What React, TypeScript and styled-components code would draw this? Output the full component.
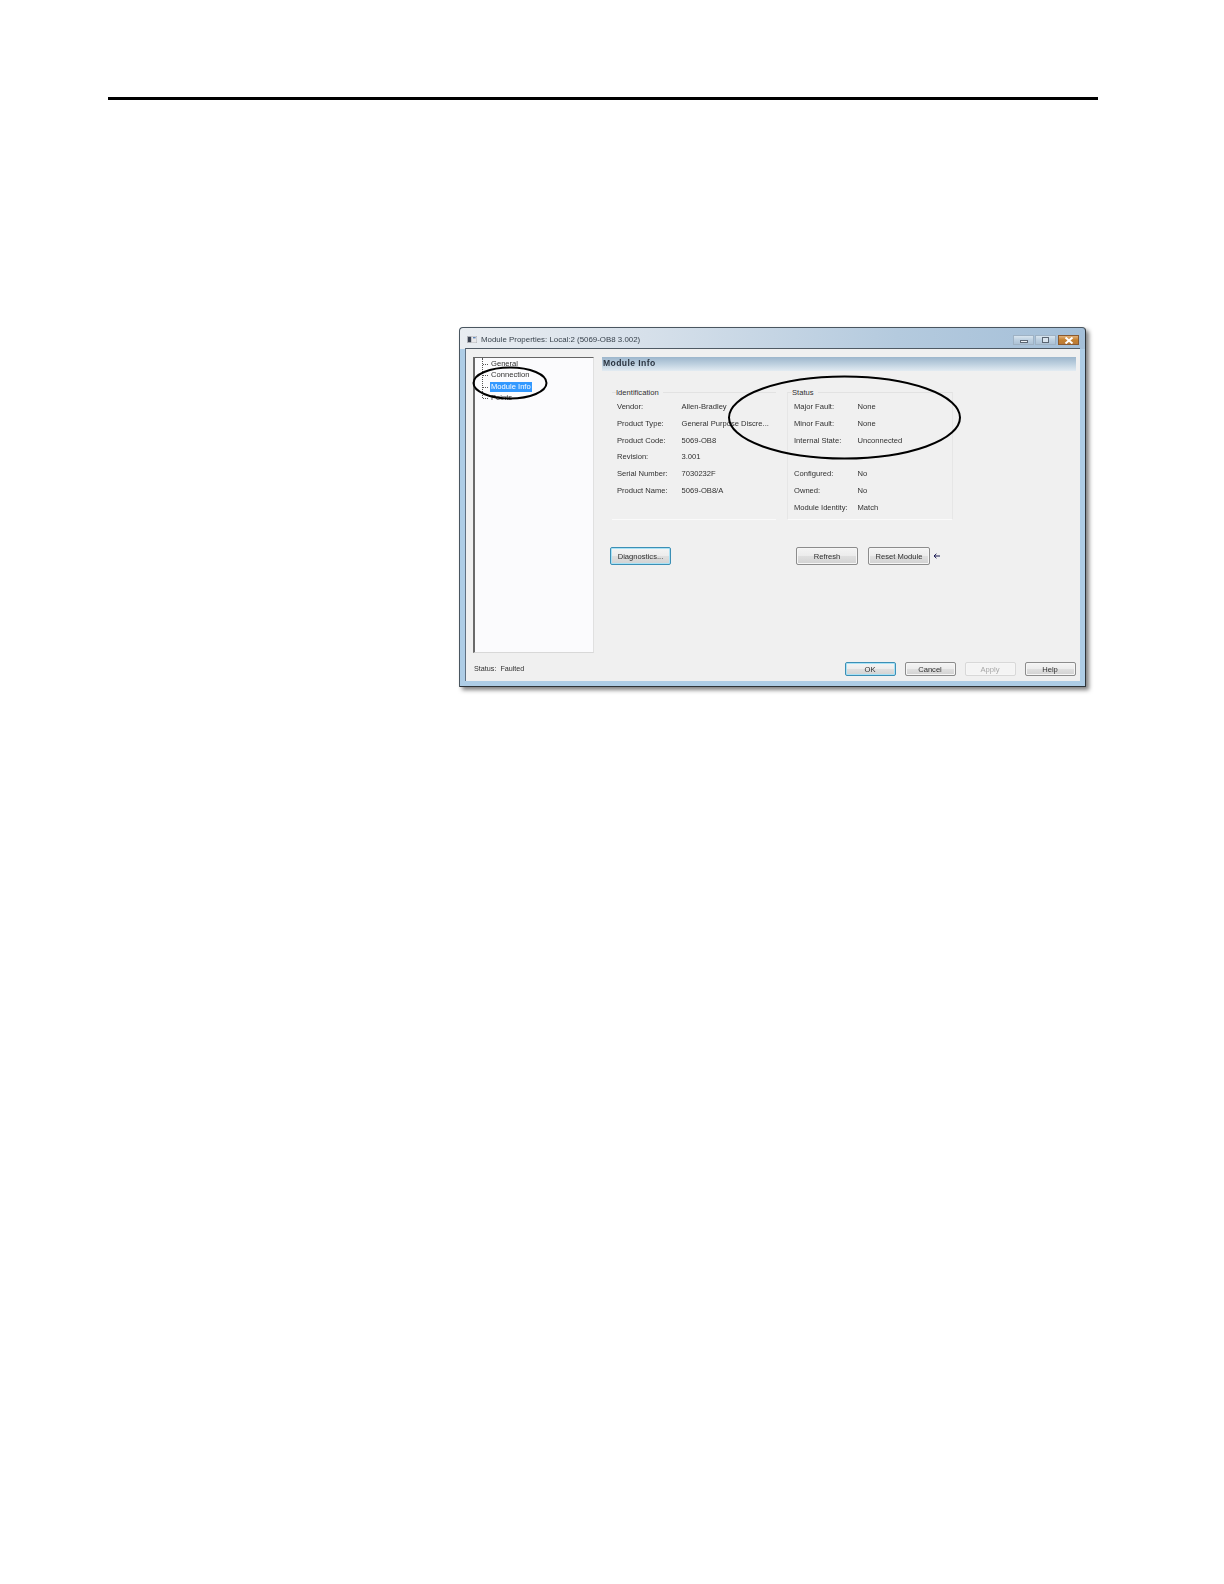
import { FC } from 'react';
import styled, { createGlobalStyle } from 'styled-components';

type InfoRow = { label: string; value: string };

const identification: InfoRow[] = [
  { label: 'Vendor:', value: 'Allen-Bradley' },
  { label: 'Product Type:', value: 'General Purpose Discre...' },
  { label: 'Product Code:', value: '5069-OB8' },
  { label: 'Revision:', value: '3.001' },
  { label: 'Serial Number:', value: '7030232F' },
  { label: 'Product Name:', value: '5069-OB8/A' },
];

// the blank row is the gap between Internal State and Configured
const status: InfoRow[] = [
  { label: 'Major Fault:', value: 'None' },
  { label: 'Minor Fault:', value: 'None' },
  { label: 'Internal State:', value: 'Unconnected' },
  { label: '', value: '' },
  { label: 'Configured:', value: 'No' },
  { label: 'Owned:', value: 'No' },
  { label: 'Module Identity:', value: 'Match' },
];

const treeItems = ['General', 'Connection', 'Module Info', 'Points'];

const InfoGroup: FC<{ title: string; rows: InfoRow[]; $boxed?: boolean }> = ({ title, rows, $boxed }) => (
  <Group $boxed={$boxed}>
    <Legend>{title}</Legend>
    {rows.map((row, i) => (
      <Row key={i} $boxed={$boxed}>
        <Label $boxed={$boxed}>{row.label}</Label>
        <span>{row.value}</span>
      </Row>
    ))}
  </Group>
);

export default function App() {
  return (
    <Page>
      <GlobalStyle />
      <TopRule />
      <Window>
        <TitleBar>
          <AppIcon viewBox="0 0 10 7">
            <rect width="10" height="7" fill="#e8e8ea" stroke="#8a8f98" strokeWidth="0.6" />
            <rect x="0.8" y="0.8" width="3.4" height="5.4" fill="#3b4250" />
            <rect x="6" y="1" width="2.6" height="1.4" fill="#5f86b8" />
          </AppIcon>
          <TitleText>Module Properties: Local:2 (5069-OB8 3.002)</TitleText>
          <WindowButtons>
            <WindowButton>
              <MinGlyph />
            </WindowButton>
            <WindowButton>
              <MaxGlyph />
            </WindowButton>
            <CloseButton>
              <svg width="10" height="7" viewBox="0 0 10 7">
                <path d="M1.5 0.5 L8.5 6.5 M8.5 0.5 L1.5 6.5" stroke="#fff" strokeWidth="2" />
              </svg>
            </CloseButton>
          </WindowButtons>
        </TitleBar>

        <Client>
          <Sidebar>
            <Tree>
              <TreeList>
                {treeItems.map(item => (
                  <TreeRow key={item}>
                    <TreeLabel $selected={item === 'Module Info'}>{item}</TreeLabel>
                  </TreeRow>
                ))}
              </TreeList>
            </Tree>
            <StatusLine>
              <span>Status:</span>
              <span>Faulted</span>
            </StatusLine>
          </Sidebar>

          <Main>
            <PanelHeader>Module Info</PanelHeader>
            <Groups>
              <InfoGroup title="Identification" rows={identification} />
              <InfoGroup title="Status" rows={status} $boxed />
            </Groups>
            <Actions>
              <Button $width={61} $focused>
                Diagnostics...
              </Button>
              <RightActions>
                <Button $width={62}>Refresh</Button>
                <Button $width={62}>Reset Module</Button>
                <svg width="7" height="6" viewBox="0 0 7 6">
                  <path d="M7 3 H1.5 M3.4 0.8 L1 3 L3.4 5.2" stroke="#16164f" strokeWidth="1" fill="none" />
                </svg>
              </RightActions>
            </Actions>
            <Footer>
              <FooterButton $width={51} $focused>
                OK
              </FooterButton>
              <FooterButton $width={51}>Cancel</FooterButton>
              <FooterButton $width={51} $disabled>
                Apply
              </FooterButton>
              <FooterButton $width={51}>Help</FooterButton>
            </Footer>
          </Main>
        </Client>

        <Callouts viewBox="0 0 627 360">
          <ellipse cx="51" cy="56" rx="36.5" ry="15.5" />
          <ellipse cx="385.5" cy="90.5" rx="115.5" ry="41" />
        </Callouts>
      </Window>
    </Page>
  );
}

const GlobalStyle = createGlobalStyle`
  html, body {
    margin: 0;
    background: #fff;
  }
`;

const Page = styled.div`
  box-sizing: border-box;
  min-height: 1584px;
  padding-top: 97px;
  background: #fff;
  font-family: 'Liberation Sans', Arial, sans-serif;
`;

const TopRule = styled.div`
  height: 3px;
  width: 990px;
  margin-left: 108px;
  background: #000;
`;

const Window = styled.div`
  position: relative;
  box-sizing: border-box;
  width: 627px;
  height: 360px;
  margin: 227px 0 0 459px;
  padding: 0 5px 5px;
  display: flex;
  flex-direction: column;
  border: 1px solid #4a5660;
  border-bottom-color: #2d3338;
  border-right-color: #2d3338;
  border-radius: 4px 4px 1px 1px;
  background: linear-gradient(to right, #e9edf1 0%, #d6e0ea 30%, #b4cade 70%, #a4bfd8 100%) top / 100% 21px no-repeat,
    #aecde6;
  box-shadow: 3px 3px 4px rgba(0, 0, 0, 0.5);
  filter: blur(0.3px);
  font-size: 7.6px;
  color: #303030;
`;

const TitleBar = styled.div`
  height: 20px;
  flex-shrink: 0;
  display: flex;
  align-items: center;
  padding: 3px 1px 0 2px;
  box-sizing: border-box;
`;

const AppIcon = styled.svg`
  width: 10px;
  height: 7px;
  margin-right: 4px;
`;

const TitleText = styled.div`
  flex: 1;
  font-size: 7.9px;
  color: #38424c;
`;

const WindowButtons = styled.div`
  display: flex;
  gap: 1px;
  margin-top: 1px;
`;

const WindowButton = styled.div`
  box-sizing: border-box;
  width: 21px;
  height: 10px;
  display: flex;
  align-items: center;
  justify-content: center;
  border: 1px solid #9fb2c4;
  background: linear-gradient(to bottom, #d9e5ef, #bccfe0 50%, #adc2d5);
`;

const CloseButton = styled(WindowButton)`
  margin-left: 1px;
  border-color: #8a5a30;
  background: linear-gradient(to bottom, #e2b27a, #c4802f 50%, #b97a3a);
`;

const MinGlyph = styled.div`
  box-sizing: border-box;
  width: 8px;
  height: 3px;
  margin-top: 3px;
  background: #eef3f7;
  border: 1px solid #5b6673;
`;

const MaxGlyph = styled.div`
  box-sizing: border-box;
  width: 7px;
  height: 6px;
  border: 1px solid #5b6673;
  background: #d9e4ee;
`;

const Client = styled.div`
  flex: 1;
  min-height: 0;
  display: flex;
  gap: 8px;
  padding: 8px 4px 5px 7px;
  border-top: 1px solid #4f5a64;
  border-left: 1px solid #5f7082;
  background: #f0f0f0;
`;

const Sidebar = styled.div`
  width: 121px;
  display: flex;
  flex-direction: column;
`;

const Tree = styled.div`
  box-sizing: border-box;
  height: 296px;
  border-top: 1px solid #666;
  border-left: 2px solid #6a6a6a;
  border-right: 1px solid #e0e0e0;
  border-bottom: 1px solid #d8d8d8;
  background: #fbfbfd;
  overflow: hidden;
`;

const TreeList = styled.div`
  margin-left: 7px;
  height: 40px;
  border-left: 1px dotted #555;
`;

const TreeRow = styled.div`
  position: relative;
  height: 11.3px;
  line-height: 11.3px;
  padding-left: 7px;

  &::before {
    content: '';
    position: absolute;
    left: 0;
    top: 6px;
    width: 5px;
    border-top: 1px dotted #555;
  }
`;

const TreeLabel = styled.span<{ $selected?: boolean }>`
  display: inline-block;
  padding: 0 1px;
  line-height: 10px;
  background: ${({ $selected }) => ($selected ? '#3399ff' : 'transparent')};
  color: ${({ $selected }) => ($selected ? '#fff' : '#303030')};
`;

const StatusLine = styled.div`
  margin-top: auto;
  height: 14px;
  line-height: 14px;
  padding-left: 1px;
  display: flex;
  gap: 4px;
  font-size: 7.2px;
  color: #303030;
`;

const Main = styled.div`
  flex: 1;
  min-width: 0;
  display: flex;
  flex-direction: column;
`;

const PanelHeader = styled.div`
  height: 14px;
  line-height: 13px;
  padding-left: 1px;
  font-size: 8.6px;
  font-weight: 700;
  letter-spacing: 0.4px;
  color: #2a3440;
  background: linear-gradient(to bottom, #9db6cc 0%, #bdd0df 50%, #e2ebf2 100%);
`;

const Groups = styled.div`
  display: flex;
  gap: 11px;
  margin: 21px 0 0 10px;
`;

const Group = styled.div<{ $boxed?: boolean }>`
  position: relative;
  box-sizing: border-box;
  width: ${({ $boxed }) => ($boxed ? '166px' : '164px')};
  height: 128px;
  padding-top: 6px;
  border-top: 1px solid #e2e2e2;
  border-bottom: 1px solid #fafafa;
  border-left: ${({ $boxed }) => ($boxed ? '1px solid #e6e6e6' : 'none')};
  border-right: ${({ $boxed }) => ($boxed ? '1px solid #e6e6e6' : 'none')};
`;

const Legend = styled.div`
  position: absolute;
  top: -5px;
  left: 4px;
  padding-right: 4px;
  line-height: 10px;
  background: #f0f0f0;
`;

const Row = styled.div<{ $boxed?: boolean }>`
  height: 16.8px;
  line-height: 16.8px;
  display: flex;
  padding-left: ${({ $boxed }) => ($boxed ? '6px' : '5px')};
`;

const Label = styled.span<{ $boxed?: boolean }>`
  width: ${({ $boxed }) => ($boxed ? '63.5px' : '64.5px')};
  flex-shrink: 0;
`;

const Actions = styled.div`
  display: flex;
  align-items: center;
  gap: 125px;
  margin: 27px 0 0 8px;
`;

const RightActions = styled.div`
  display: flex;
  align-items: center;
  gap: 10px;

  svg {
    margin-left: -7px;
  }
`;

const Button = styled.div<{ $width: number; $focused?: boolean; $disabled?: boolean }>`
  box-sizing: border-box;
  width: ${({ $width }) => $width}px;
  height: 18px;
  display: flex;
  align-items: center;
  justify-content: center;
  border: 1px solid ${({ $focused, $disabled }) => ($focused ? '#3c8fb5' : $disabled ? '#d8d8d8' : '#8c8c8c')};
  border-radius: 2px;
  background: ${({ $disabled }) =>
    $disabled ? '#f4f4f4' : 'linear-gradient(to bottom, #f4f4f4 0%, #ececec 48%, #dfdfdf 52%, #d2d2d2 100%)'};
  box-shadow: ${({ $focused }) => ($focused ? 'inset 0 0 0 1px #a8e2f6' : 'inset 0 0 0 1px #f6f6f6')};
  color: ${({ $disabled }) => ($disabled ? '#a8a8a8' : '#303030')};
`;

const FooterButton = styled(Button)`
  height: 14px;
`;

const Footer = styled.div`
  display: flex;
  justify-content: flex-end;
  gap: 9px;
  margin-top: auto;
  padding-right: 0.5px;
`;

const Callouts = styled.svg`
  position: absolute;
  left: -1px;
  top: -1px;
  width: 627px;
  height: 360px;
  pointer-events: none;

  ellipse {
    fill: none;
    stroke: #000;
    stroke-width: 2;
  }
`;
